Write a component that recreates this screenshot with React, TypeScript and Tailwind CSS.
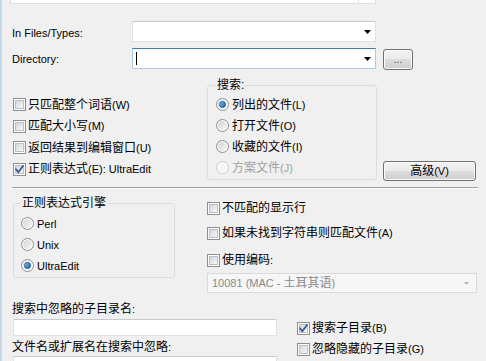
import type { ReactNode } from 'react'

// Latin parts inside Chinese labels are a touch smaller
const L = ({ children }: { children: ReactNode }) => <span className="text-[11px]">{children}</span>

function Check({ checked }: { checked?: boolean }) {
  return (
    <span className="relative block w-[13px] h-[13px] shrink-0 border border-[#8e8f8f] bg-white p-[1px]">
      <span className="block w-full h-full border border-[#bbbec4] bg-linear-to-br from-[#d3d6da] to-[#f8f8f8]" />
      {checked && (
        <svg viewBox="0 0 11 11" className="absolute inset-0 w-[11px] h-[11px]">
          <path d="M2 5.3 L4.3 8.2 L9 2" fill="none" stroke="#3a5590" strokeWidth="1.8" strokeLinecap="round" strokeLinejoin="round" />
        </svg>
      )}
    </span>
  )
}

function Radio({ on, disabled }: { on?: boolean; disabled?: boolean }) {
  return (
    <span
      className={`flex w-[13px] h-[13px] shrink-0 items-center justify-center rounded-full border shadow-[inset_0_0_0_1px_#ffffff] ${
        disabled ? 'border-[#cacaca] bg-[#f5f5f5]' : 'border-[#8f9092] bg-linear-to-br from-[#cdd0d4] to-[#fbfbfb]'
      }`}
    >
      {on && <span className="block w-[7px] h-[7px] rounded-full border border-[#1b5a90] bg-linear-to-br from-[#7ccaf8] to-[#0b5ba2]" />}
    </span>
  )
}

function CheckRow({ checked, className = '', children }: { checked?: boolean; className?: string; children: ReactNode }) {
  return (
    <div className={`flex items-center gap-[2px] ${className}`}>
      <Check checked={checked} />
      <span>{children}</span>
    </div>
  )
}

function RadioRow({ on, disabled, className = '', children }: { on?: boolean; disabled?: boolean; className?: string; children: ReactNode }) {
  return (
    <div className={`flex items-center gap-[3px] ${disabled ? 'text-[#a0a0a0]' : ''} ${className}`}>
      <Radio on={on} disabled={disabled} />
      <span>{children}</span>
    </div>
  )
}

function Arrow({ color = '#000000', w = 7, h = 4 }: { color?: string; w?: number; h?: number }) {
  return (
    <svg width={w} height={h} viewBox={`0 0 ${w} ${h}`} className="shrink-0">
      <path d={`M0 0 H${w} L${w / 2} ${h} Z`} fill={color} />
    </svg>
  )
}

function Combo({ focused, children }: { focused?: boolean; children?: ReactNode }) {
  return (
    <div
      className={`flex h-[21px] w-[244px] items-center border bg-white ${
        focused ? 'border-[#a9cbe6] border-t-[#3f7cab]' : 'border-[#dfe1e6] border-t-[#c3c6cc]'
      }`}
    >
      <div className="flex flex-1 items-center">{children}</div>
      <span className="mr-[4px]">
        <Arrow />
      </span>
    </div>
  )
}

function Button({ className = '', children }: { className?: string; children: ReactNode }) {
  return (
    <button
      className={`flex items-center justify-center rounded-[3px] border border-[#707070] bg-[linear-gradient(#f2f2f2,#ebebeb_50%,#dddddd_50%,#cfcfcf)] shadow-[inset_0_0_0_1px_#fbfbfb] ${className}`}
    >
      {children}
    </button>
  )
}

function TextBox({ className = '' }: { className?: string }) {
  return <div className={`ml-[1px] h-[17px] w-[264px] border border-[#e0e2e6] border-t-[#c6c9cf] bg-white ${className}`} />
}

export default function App() {
  return (
    <div className="h-[361px] w-[486px] overflow-hidden border-l-2 border-[#c4d6ea] bg-[#f0f0f0] pl-[10px] pr-[8px] font-['Liberation_Sans','Noto_Sans_CJK_SC',sans-serif] text-[12px] leading-[14px] text-black select-none">
      {/* tail of the field above */}
      <div className="ml-[-2px] flex h-[4px] w-[366px] border-x border-b border-[#dcdfe4] bg-white">
        <div className="flex-1" />
        <div className="w-[17px] border-l border-[#dcdfe4]" />
      </div>

      {/* In Files / Directory */}
      <div className="mt-[17px] flex items-center">
        <span className="w-[120px] pt-[2px] text-[11px]">In Files/Types:</span>
        <Combo />
      </div>
      <div className="mt-[5px] flex items-center">
        <span className="w-[120px] pt-[1px] text-[11px]">Directory:</span>
        <Combo focused>
          <span className="ml-[3px] block h-[13px] w-px bg-black" />
        </Combo>
        <Button className="ml-[7px] mt-[2px] h-[21px] w-[30px] text-[10px] leading-[10px] text-[#4a3f5a]">...</Button>
      </div>

      {/* options + search scope */}
      <div className="mt-[8px] grid grid-cols-[195px_170px_99px]">
        <div className="pl-[1px] pt-[16px]">
          <CheckRow className="h-[21.5px]">只匹配整个词语<L>(W)</L></CheckRow>
          <CheckRow className="h-[21.5px]">匹配大小写<L>(M)</L></CheckRow>
          <CheckRow className="h-[21.5px]">返回结果到编辑窗口<L>(U)</L></CheckRow>
          <CheckRow checked className="h-[21.5px]">正则表达式<L>(E): UltraEdit</L></CheckRow>
        </div>
        <fieldset className="rounded-[3px] border border-[#d5dfe5] pl-[8px] pt-[2px]">
          <legend className="px-[1px]">搜索:</legend>
          <RadioRow on className="h-[21px]">列出的文件<L>(L)</L></RadioRow>
          <RadioRow className="h-[21px]">打开文件<L>(O)</L></RadioRow>
          <RadioRow className="h-[21px]">收藏的文件<L>(I)</L></RadioRow>
          <RadioRow disabled className="h-[21px]">方案文件<L>(J)</L></RadioRow>
        </fieldset>
        <div className="flex flex-col justify-end pl-[6px]">
          <Button className="mb-[-1px] h-[20px] w-[93px]">高级<L>(V)</L></Button>
        </div>
      </div>

      <div className="mt-[7px] h-[2px] border-t border-b border-t-[#a0a0a0] border-b-white" />

      {/* regex engine + misc */}
      <div className="mt-[7px] grid grid-cols-[195px_271px]">
        <div>
          <fieldset className="ml-[1px] w-[162px] rounded-[3px] border border-[#d5dfe5] pb-[1px] pl-[7px] pt-[3px]">
            <legend className="px-[1px]">正则表达式引擎</legend>
            <RadioRow className="h-[21px]"><L>Perl</L></RadioRow>
            <RadioRow className="h-[21px]"><L>Unix</L></RadioRow>
            <RadioRow on className="h-[21px]"><L>UltraEdit</L></RadioRow>
          </fieldset>
        </div>
        <div className="flex flex-col">
          <CheckRow className="mt-[3px] h-[18px]">不匹配的显示行</CheckRow>
          <CheckRow className="mt-[7px] h-[18px]">如果未找到字符串则匹配文件<L>(A)</L></CheckRow>
          <CheckRow className="mt-[9px] h-[18px]">使用编码<L>:</L></CheckRow>
          <div className="mt-[4px] flex h-[20px] w-[270px] items-center border border-[#d9d9d9] bg-[#f6f6f6] text-[#8a8a8a]">
            <span className="flex-1 pl-[4px]">
              <L>10081 (MAC - </L>土耳其语<L>)</L>
            </span>
            <span className="mr-[7px]">
              <Arrow color="#b4b4b4" w={5} h={3} />
            </span>
          </div>
        </div>
      </div>

      {/* ignore lists */}
      <div className="mt-[9px] grid grid-cols-[265px_1fr]">
        <div>
          <div className="h-[14px]">搜索中忽略的子目录名<L>:</L></div>
          <TextBox className="mt-[3px]" />
          <div className="mt-[4px] h-[14px]">文件名或扩展名在搜索中忽略<L>:</L></div>
          <TextBox className="mt-[2px]" />
        </div>
        <div className="pl-[20px] pt-[17px]">
          <CheckRow checked className="h-[18px]">搜索子目录<L>(B)</L></CheckRow>
          <CheckRow className="mt-[3px] h-[18px]">忽略隐藏的子目录<L>(G)</L></CheckRow>
        </div>
      </div>
    </div>
  )
}
